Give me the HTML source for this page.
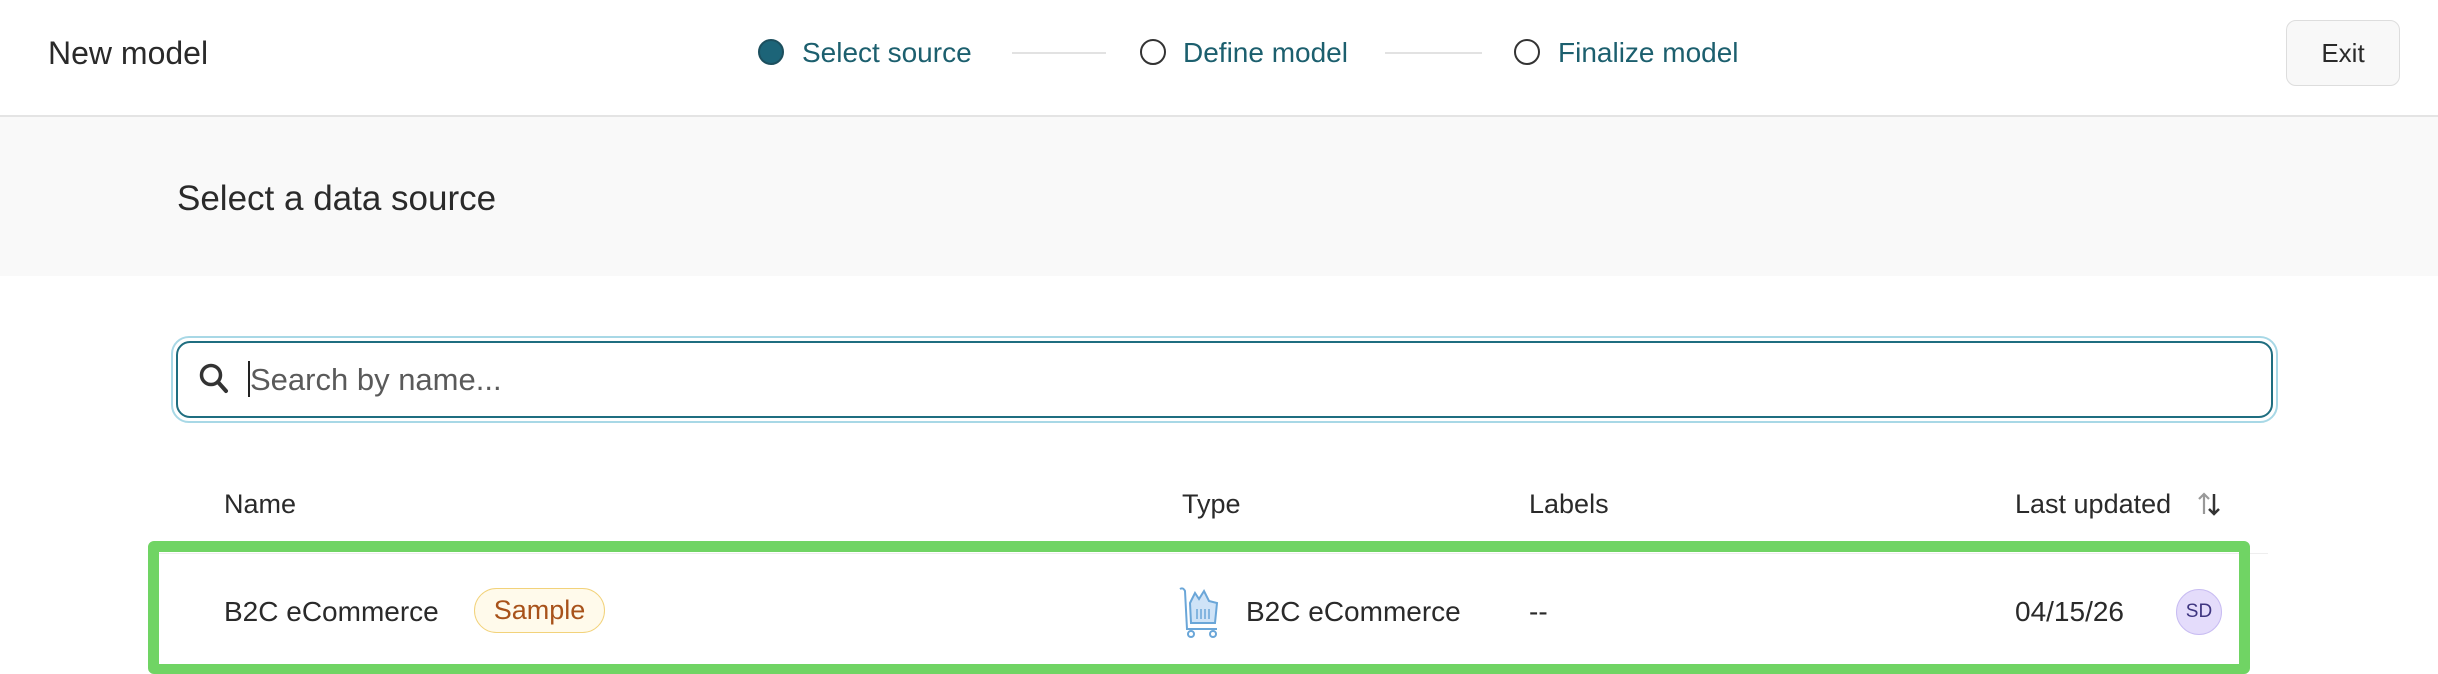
<!DOCTYPE html>
<html><head><meta charset="utf-8"><style>
*{box-sizing:border-box;margin:0;padding:0}
body{width:2438px;height:674px;overflow:hidden;background:#fff;font-family:"Liberation Sans",sans-serif;color:#2a2a2a;position:relative}
.a{position:absolute;white-space:nowrap}
.stp{font-size:28px;color:#1c5f6e;top:37px}
.ln{position:absolute;top:52px;height:2px;background:#e2e2e2}
.circ{position:absolute;top:39px;width:26px;height:26px;border-radius:50%;border:2px solid #333;background:#fff}
.th{font-size:27px;top:489px;color:#2a2a2a}
.td{font-size:28px;top:596px;color:#2a2a2a}
</style></head><body>
<div class="a" style="left:48px;top:35px;font-size:32px">New model</div>
<div class="circ" style="left:758px;background:#1c6478;border-color:#1c4f5e"></div>
<div class="a stp" style="left:802px">Select source</div>
<div class="ln" style="left:1012px;width:94px"></div>
<div class="circ" style="left:1140px"></div>
<div class="a stp" style="left:1183px">Define model</div>
<div class="ln" style="left:1385px;width:97px"></div>
<div class="circ" style="left:1514px"></div>
<div class="a stp" style="left:1558px">Finalize model</div>
<div class="a" style="left:2286px;top:20px;width:114px;height:66px;border:1px solid #ddd;border-radius:10px;background:#f8f8f8;font-size:26px;display:flex;align-items:center;justify-content:center">Exit</div>
<div class="a" style="left:0;top:115px;width:2438px;height:161px;background:#f9f9f9;border-top:2px solid #e4e4e4"></div>
<div class="a" style="left:177px;top:179px;font-size:35px">Select a data source</div>
<div class="a" style="left:171px;top:336px;width:2107px;height:87px;border:2px solid #a8d8e6;border-radius:18px;padding:3px">
<div style="width:100%;height:100%;border:2px solid #1f6e80;border-radius:14px"></div></div>
<svg class="a" style="left:198px;top:362px" width="32" height="34" viewBox="0 0 32 34"><circle cx="13" cy="13" r="9.5" fill="none" stroke="#333" stroke-width="3.5"/><line x1="20" y1="20" x2="28" y2="29" stroke="#333" stroke-width="4" stroke-linecap="round"/></svg>
<div class="a" style="left:248px;top:361px;width:2px;height:36px;background:#222"></div>
<div class="a" style="left:250px;top:362px;font-size:31px;color:#5a5a5a">Search by name...</div>
<div class="a th" style="left:224px">Name</div>
<div class="a th" style="left:1182px">Type</div>
<div class="a th" style="left:1529px">Labels</div>
<div class="a th" style="left:2015px">Last updated</div>
<svg class="a" style="left:2196px;top:490px" width="26" height="28" viewBox="0 0 26 28"><path d="M8 24V4M3 9l5-5 5 5" fill="none" stroke="#999" stroke-width="2.2"/><path d="M18 4v20M13 19l5 5 5-5" fill="none" stroke="#333" stroke-width="2.5"/></svg>
<div class="a" style="left:148px;top:553px;width:2120px;height:1px;background:#eee"></div>
<div class="a" style="left:148px;top:541px;width:2102px;height:133px;border:11px solid #70d464;border-radius:6px;border-bottom-width:10px"></div>
<div class="a td" style="left:224px">B2C eCommerce</div>
<div class="a" style="left:474px;top:588px;width:131px;height:45px;border:1.5px solid #f2d27a;background:#fffaeb;border-radius:23px;color:#a8521a;font-size:27px;display:flex;align-items:center;justify-content:center">Sample</div>
<svg class="a" style="left:1177px;top:585px" width="48" height="54" viewBox="0 0 48 54"><path d="M3 4 Q6 2 8 6 L10 44 L40 44" fill="none" stroke="#6aa6d8" stroke-width="2"/><path d="M13 18 L18 8 L22 14 L27 6 L32 16 L40 18 L38 38 L14 38 Z" fill="#cfe3f7" stroke="#6aa6d8" stroke-width="2"/><path d="M20 24v10M24 24v10M28 24v10M32 24v10" stroke="#6aa6d8" stroke-width="1.5"/><circle cx="14" cy="49" r="3" fill="none" stroke="#6aa6d8" stroke-width="2"/><circle cx="36" cy="49" r="3" fill="none" stroke="#6aa6d8" stroke-width="2"/></svg>
<div class="a td" style="left:1246px">B2C eCommerce</div>
<div class="a td" style="left:1529px">--</div>
<div class="a td" style="left:2015px">04/15/26</div>
<div class="a" style="left:2176px;top:589px;width:46px;height:46px;border-radius:50%;background:#e4dcfb;border:1.5px solid #c8bcf2;color:#3e3580;font-size:19px;display:flex;align-items:center;justify-content:center">SD</div>
</body></html>
